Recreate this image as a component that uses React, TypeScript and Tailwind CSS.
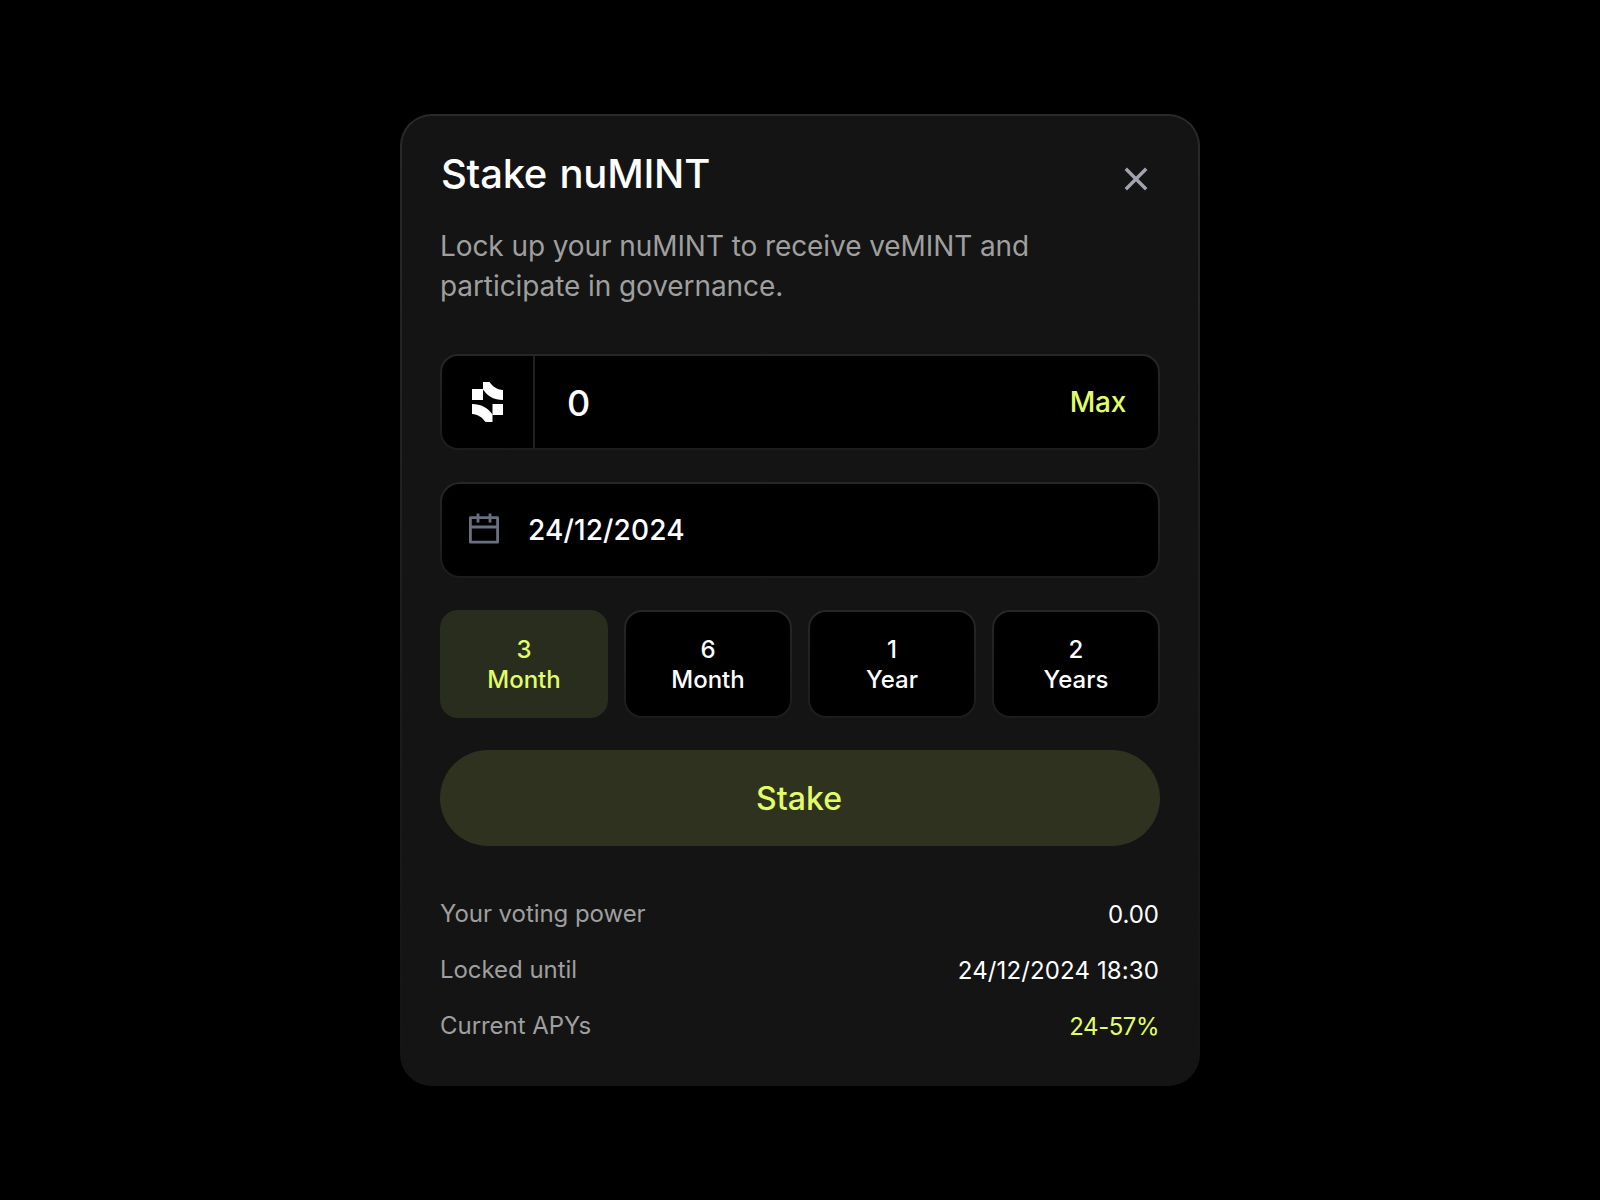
import React from "react";

const durations = [
  { amount: "3", unit: "Month" },
  { amount: "6", unit: "Month" },
  { amount: "1", unit: "Year" },
  { amount: "2", unit: "Years" },
];

const details = [
  { label: "Your voting power", value: "0.00", style: "text-white" },
  {
    label: "Locked until",
    value: "24/12/2024 18:30",
    style: "text-white tracking-[0.005em]",
  },
  {
    label: "Current APYs",
    value: "24-57%",
    style: "text-[#e0fd66] tracking-[-0.02em]",
  },
];

const CloseIcon = () => (
  <svg width="24" height="24" viewBox="0 0 24 24" fill="none">
    <path
      d="M1.8 1.8L22.2 22.2M22.2 1.8L1.8 22.2"
      stroke="#a1a3af"
      strokeWidth="3.4"
    />
  </svg>
);

const MintLogo = () => (
  <svg width="31" height="40" viewBox="0 0 31 40" fill="#fff">
    <path d="M0 7H11V18H0Z" />
    <path d="M11 0H17.5C20.5 4.5 25 7.6 31 8V18C22 18 15.5 14 11 7.5Z" />
    <path d="M20.5 22H31V33H20.5Z" />
    <path d="M0 22C9 22 16 26 20.5 32.5V40H13.5C10.5 35.5 6 32.4 0 32Z" />
  </svg>
);

const CalendarIcon = () => (
  <svg
    width="30"
    height="31"
    viewBox="0 0 30 31"
    fill="none"
    stroke="#6b7080"
    strokeWidth="2.8"
  >
    <path d="M1.4 4.6H28.6V29.2H1.4Z" strokeLinejoin="round" />
    <path d="M1.4 14H28.6M9 0.4V9.4M21 0.4V9.4" />
  </svg>
);

const App = () => {
  return (
    <div className="flex min-h-screen items-center justify-center bg-black font-['Inter',sans-serif]">
      <div className="h-[972px] w-[800px] rounded-[32px] bg-linear-to-b from-[#292929] to-[#141414] p-0.5">
        <div className="h-full rounded-[30px] bg-[#141414] px-[38px] pt-[34px]">
          <div className="flex items-start justify-between">
            <h2 className="pl-px text-[40px] leading-12 font-medium tracking-[-0.006em] text-white [word-spacing:2px]">
              Stake nuMINT
            </h2>
            <button className="mt-[17px] mr-3">
              <CloseIcon />
            </button>
          </div>
          <p className="mt-7 w-[620px] text-[28px] leading-10 tracking-[-0.003em] text-[#9f9f9f]">
            Lock up your nuMINT to receive veMINT and participate in governance.
          </p>

          <div className="mt-12 h-24 rounded-[18px] bg-linear-to-b from-[#262626] to-[#1c1c1c] p-0.5">
            <div className="flex h-full rounded-2xl bg-black">
              <div className="flex w-[93px] items-center justify-center border-r-2 border-[#212121]">
                <MintLogo />
              </div>
              <div className="flex flex-1 items-center justify-between pr-8 pl-8">
                <span className="pt-px text-[36px] font-medium text-white">
                  0
                </span>
                <span className="text-[28px] font-medium tracking-[-0.01em] text-[#e0fd66]">
                  Max
                </span>
              </div>
            </div>
          </div>

          <div className="mt-8 h-24 rounded-[20px] bg-linear-to-b from-[#262626] to-[#1c1c1c] p-0.5">
            <div className="flex h-full items-center rounded-[18px] bg-black pl-[27px]">
              <div className="pb-1">
                <CalendarIcon />
              </div>
              <span className="ml-[29px] text-[28px] font-medium tracking-[0.005em] text-white">
                24/12/2024
              </span>
            </div>
          </div>

          <div className="mt-8 grid grid-cols-4 gap-4">
            {durations.map((duration, index) => (
              <button
                key={index}
                className={`h-[108px] rounded-[18px] p-0.5 text-2xl leading-[30px] font-medium ${
                  index === 0
                    ? "bg-[#292d1e] text-[#e0fd66]"
                    : "bg-linear-to-b from-[#262626] to-[#1c1c1c] text-white"
                }`}
              >
                <div
                  className={`flex h-full flex-col items-center justify-center rounded-2xl pt-0.5 ${
                    index === 0 ? "" : "bg-black"
                  }`}
                >
                  <span>{duration.amount}</span>
                  <span>{duration.unit}</span>
                </div>
              </button>
            ))}
          </div>

          <button className="mt-8 h-24 w-full rounded-full bg-[#303220] pt-0.5 pr-0.5 text-[32px] font-medium text-[#e0fd66]">
            Stake
          </button>

          <div className="mt-13 flex flex-col gap-[23px]">
            {details.map((detail) => (
              <div
                key={detail.label}
                className="flex justify-between text-2xl leading-8"
              >
                <span className="tracking-[-0.002em] text-[#9f9f9f]">
                  {detail.label}
                </span>
                <span className={`pt-px pr-px ${detail.style}`}>
                  {detail.value}
                </span>
              </div>
            ))}
          </div>
        </div>
      </div>
    </div>
  );
};

export default App;
